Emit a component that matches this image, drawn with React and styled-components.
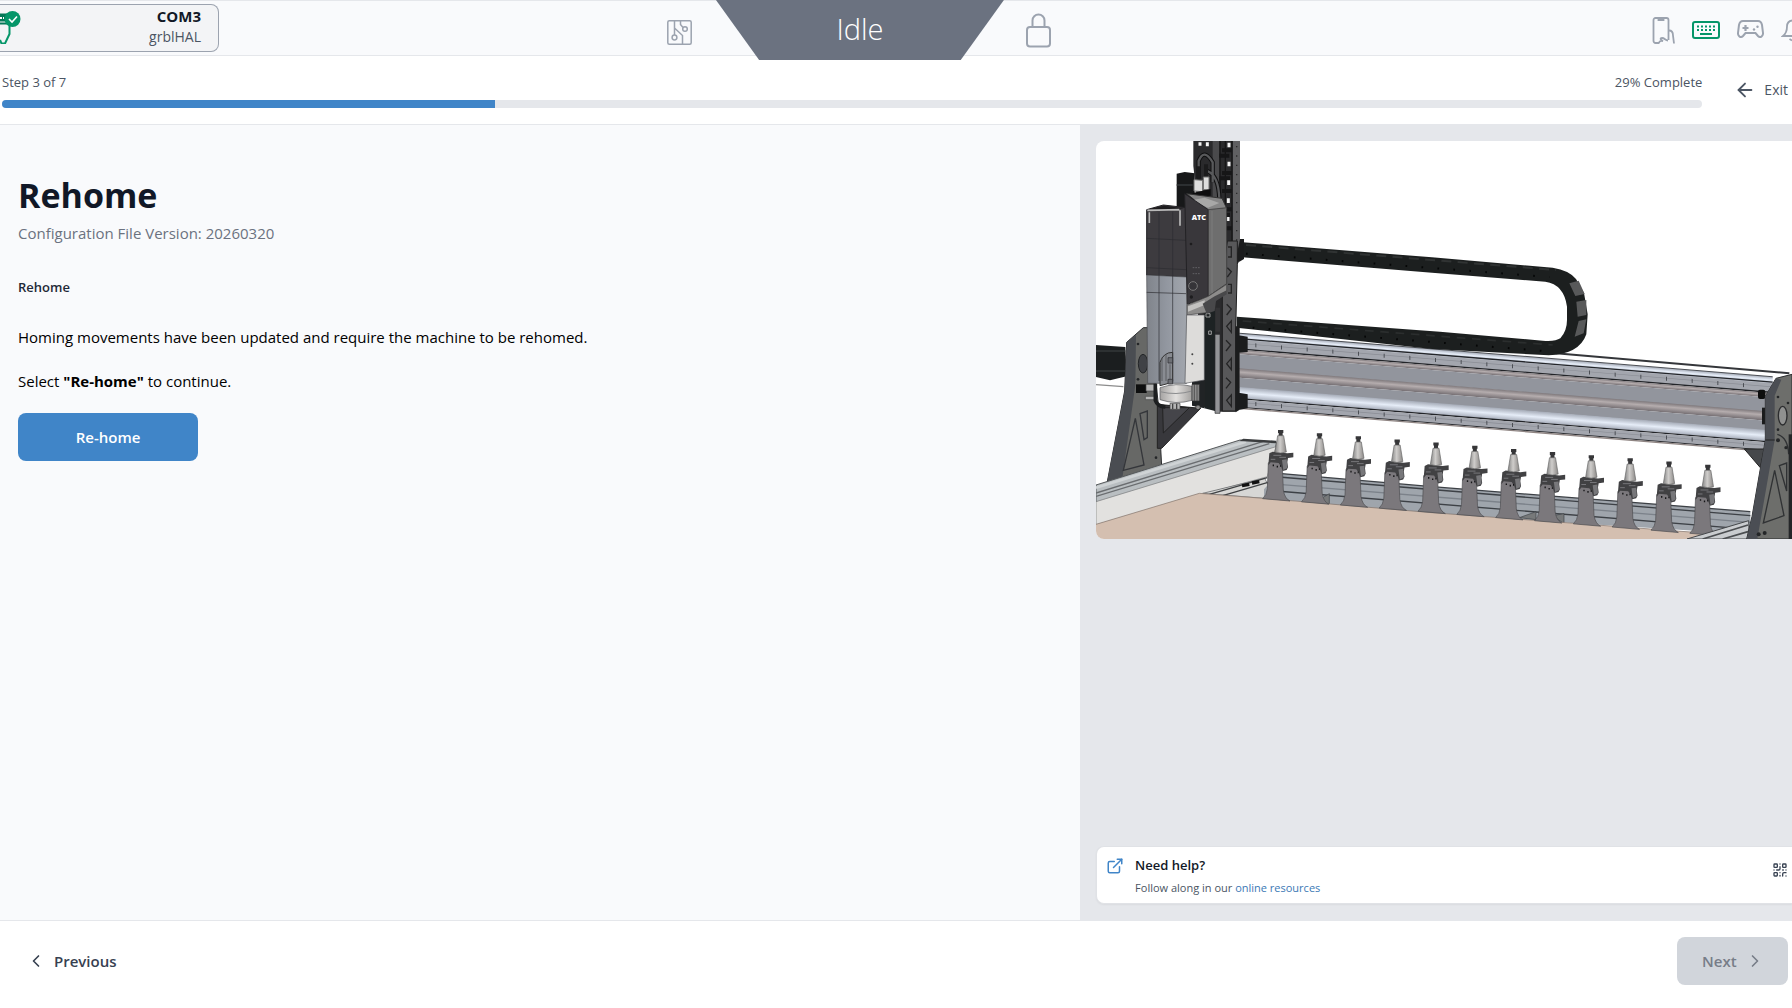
import React from "react";
import styled, { createGlobalStyle } from "styled-components";
import { LuArrowLeft, LuChevronLeft, LuChevronRight, LuExternalLink, LuQrCode } from "react-icons/lu";

const GlobalStyle = createGlobalStyle`
* {
    box-sizing: border-box;
}
body {
    margin: 0;
    overflow-x: hidden;
    background: #ffffff;
    color: #000000;
    font-family: "Open Sans", "Noto Sans", sans-serif;
    font-size: 15px;
    line-height: 24px;
}
button {
    font: inherit;
    color: inherit;
    border: 0;
    padding: 0;
    background: none;
    cursor: pointer;
}
h1, h2, p {
    margin: 0;
}
svg {
    display: block;
    flex-shrink: 0;
}
`

const Page = styled.div`
display: flex;
flex-direction: column;
min-height: 100vh;
`

const TopBar = styled.header`
display: grid;
grid-template-columns: 9fr auto 10fr;
height: 56px;
background: #f9fafc;
border-top: 1px solid #e5e7eb;
border-bottom: 1px solid #e5e7eb;
`

const PortCard = styled.button`
display: flex;
align-items: center;
justify-content: space-between;
width: 219px;
height: 48px;
margin-top: 3px;
padding: 0 17px 4px 0;
background: #f3f4f6;
border: 1px solid #9ca3af;
border-left: 0;
border-radius: 0 8px 8px 0;
text-align: right;
`

const PortName = styled.span`
display: block;
line-height: 22px;
font-weight: 700;
color: #111827;
`

const Firmware = styled.span`
display: block;
font-size: 14px;
line-height: 20px;
color: #4b5563;
`

const StatusGroup = styled.div`
display: flex;
align-items: flex-start;
margin-top: -1px;
`

const StatusIcon = styled.button`
width: 25px;
margin-top: ${(p) => p.$top}px;
color: #9ca3af;
`

const MachineStatus = styled.div`
z-index: 1;
width: 288px;
height: 60px;
margin: 0 22px 0 24px;
background: #6b7280;
clip-path: polygon(0 0, 100% 0, 85% 100%, 15% 100%);
color: #ffffff;
font-size: 29px;
font-weight: 300;
line-height: 58px;
text-align: center;
`

const Tray = styled.nav`
display: flex;
align-items: center;
justify-content: flex-end;
gap: 17px;
padding-bottom: 2px;
color: #9ca3af;
`

const TrayButton = styled.button`
color: ${(p) => (p.$active ? "#059669" : "inherit")};
`

const StepBar = styled.section`
display: flex;
align-items: center;
gap: 32px;
padding: 16px 4px 16px 2px;
border-bottom: 1px solid #e5e7eb;
color: #4b5563;
`

const Progress = styled.div`
flex: 1;
`

const ProgressLabels = styled.div`
display: flex;
justify-content: space-between;
margin-bottom: 8px;
font-size: 13px;
line-height: 20px;
`

const Track = styled.div`
height: 8px;
border-radius: 4px;
background: #e5e7eb;
overflow: hidden;
`

const Fill = styled.div`
height: 8px;
background: #4085c8;
`

const ExitButton = styled.button`
display: flex;
align-items: center;
gap: 8px;
font-size: 14px;
`

const Main = styled.main`
flex: 1;
display: grid;
grid-template-columns: 44fr 29fr;
`

const Content = styled.section`
display: flex;
flex-direction: column;
align-items: flex-start;
gap: 20px;
padding: 50px 18px;
background: #f9fafc;
`

const Title = styled.h1`
font-size: 34px;
line-height: 40px;
font-weight: 700;
color: #111827;
margin-bottom: 6px;
`

const Version = styled.p`
color: #6b7280;
`

const StepName = styled.h2`
margin: 12px 0 8px;
font-size: 13px;
line-height: 20px;
font-weight: 600;
color: #1f2937;
`

const PrimaryButton = styled.button`
width: 180px;
height: 48px;
border-radius: 8px;
background: #4085c8;
color: #ffffff;
font-weight: 600;
`

const Aside = styled.aside`
display: flex;
flex-direction: column;
justify-content: space-between;
padding: 16px 0 16px 16px;
background: #e5e7eb;
`

const Figure = styled.div`
height: 398px;
border-radius: 8px 0 0 8px;
background: #ffffff;
overflow: hidden;
`

const HelpCard = styled.div`
display: flex;
align-items: flex-start;
gap: 11px;
height: 58px;
padding: 8px 4px 8px 9px;
border: 1px solid #e0e2e6;
border-right: 0;
border-radius: 8px 0 0 8px;
background: #ffffff;
box-shadow: 0 1px 2px rgba(0, 0, 0, 0.05);
`

const HelpIcon = styled.span`
padding-top: 2px;
color: #4085c8;
`

const HelpText = styled.div`
flex: 1;
font-size: 11px;
line-height: 20px;
color: #4b5563;

strong {
    display: block;
    margin-bottom: 3px;
    font-size: 13px;
    font-weight: 600;
    color: #111827;
}
a {
    color: #3b78b5;
    text-decoration: none;
}
`

const QrButton = styled.button`
padding-top: 7px;
color: #374151;
`

const Footer = styled.footer`
display: flex;
align-items: center;
justify-content: space-between;
padding: 16px 4px 23px 26px;
border-top: 1px solid #e5e7eb;
`

const NavButton = styled.button`
display: flex;
align-items: center;
gap: 8px;
height: 48px;
font-size: 15px;
font-weight: 600;
color: #374151;

&:disabled {
    width: 111px;
    padding-left: 25px;
    border-radius: 8px;
    background: #d1d5db;
    color: #777d88;
    cursor: default;
}
`

function PlugIcon() {
    return (
        <svg width="22" height="36" viewBox="0 7 22 36" fill="none" stroke="#047857" strokeWidth="2">
            <path d="M0 12.500h8v8H0z" fill="#047857" stroke="none" />
            <path d="M0 17h4" stroke="#fff" strokeDasharray="2 1" />
            <path d="M0 22.500h10" />
            <path d="M9.500 24v9L5 42.500H1.500L0 39" stroke="#059669" />
            <circle cx="12.500" cy="18" r="8" fill="#059669" stroke="none" />
            <path d="M9 18l3 3 5-5.500" stroke="#fff" strokeWidth="1.600" />
        </svg>
    )
}

function BoardIcon() {
    return (
        <svg width="25" height="25" viewBox="0 0 25 25" fill="none" stroke="currentColor" strokeWidth="1.500">
            <rect x="0.800" y="0.800" width="23.400" height="23.400" rx="1.500" />
            <path d="M7.500 1v14M7.500 8l8 7.500V24M13.500 1v3.500l2.500 3" />
            <circle cx="7.500" cy="17.500" r="2.400" />
            <circle cx="18" cy="9" r="2.300" />
        </svg>
    )
}

function LockIcon() {
    return (
        <svg width="25" height="35" viewBox="0 0 25 35" fill="none" stroke="currentColor" strokeWidth="2">
            <rect x="1" y="14" width="23" height="19.500" rx="3" />
            <path d="M6.500 14V7.500a6 6 0 0 1 12 0V14" />
        </svg>
    )
}

function PhoneIcon() {
    return (
        <svg width="23" height="28" viewBox="0 0 23 28" fill="none" stroke="currentColor" strokeWidth="1.800">
            <path d="M7 27H3.500a2 2 0 0 1-2-2v-21a2 2 0 0 1 2-2h11a2 2 0 0 1 2 2V24" />
            <path d="M6.500 2.500v1.500h5V2.500" />
            <path d="M7 27.500c0-2 1.500-3 4-2.500-3-1.500-3-3-1-3 3 0 3 2.500 6 2.500M17 14.500c3 0 4 2 4 5l1 8" />
        </svg>
    )
}

function KeyboardIcon() {
    return (
        <svg width="28" height="18" viewBox="0 0 28 18" fill="none" stroke="currentColor" strokeWidth="2">
            <rect x="1" y="1" width="26" height="16" rx="2" />
            <path d="M5 5.500h18M5 9h18" strokeDasharray="2 2" />
            <path d="M8 13h12" />
        </svg>
    )
}

function GamepadIcon() {
    return (
        <svg width="27" height="19" viewBox="0 0 27 19" fill="none" stroke="currentColor" strokeWidth="2">
            <path d="M6 1h15c2 0 3.500 1.500 4 4l1 8c.3 3-2.800 5.500-5 3l-2.500-3h-10L6 16c-2.200 2.500-5.300 0-5-3l1-8c.5-2.500 2-4 4-4z" />
            <path d="M5.500 8h6M8.500 5v6" strokeWidth="2.200" />
            <circle cx="17" cy="9.500" r="1.200" fill="currentColor" stroke="none" />
            <circle cx="20.500" cy="6.800" r="1.200" fill="currentColor" stroke="none" />
        </svg>
    )
}

function BellIcon() {
    return (
        <svg width="11" height="24" viewBox="0 0 11 24" fill="none" stroke="currentColor" strokeWidth="1.800">
            <path d="M11 2.500c-3 .5-5 3-5 6 0 5-1.500 7.500-4 9.500h9M8.500 21l2.500 1.500" />
        </svg>
    )
}

const forks = Array.from({ length: 12 }, (_, i) => i);

function ToolHolder({ index }) {
    return (
        <g transform={`translate(${554 + index * 116.5} ${867 + index * 9.45})`}>
            <path d="M-37 100Q-34 92-28 94H-2Q4 98 5 110L8 180Q12 206 28 213L-54 206Q-42 196-40 176z" fill="#7b787c" stroke="#4c4b4e" strokeWidth="2" />
            <path d="M-37 106l3-36 10-5 44 5 18-2v14l-16 2-2 12 2 16-4 8-12 3-4-12-8-12-24-2z" fill="#414143" />
            <path d="M4 90l14-2 2 26-12 6z" fill="#77777a" />
            <path d="M-22 76h24M-4 82h20M-30 88h14" stroke="#77777b" strokeWidth="3" />
            <path d="M-24 106h4M-12 110h4M-2 108h3" stroke="#151517" strokeWidth="5" />
            <path d="M-8 0H8V9H6V18H-6V9H-8z" fill="#363638" />
            <path d="M-9 17H9L17 66Q0 72-17 66z" fill="url(#cone)" stroke="#666" strokeWidth="2" />
        </g>
    )
}

// Units are thirds of a pixel so the small parts can stay on whole numbers
function MachineDrawing() {
    return (
        <svg width="100%" height="398" viewBox="0 0 2088 1194" preserveAspectRatio="xMinYMin slice" role="img" aria-label="CNC machine with tool rack">
            <defs>
                <linearGradient id="cone">
                    <stop offset="0" stopColor="#858585" />
                    <stop offset="0.45" stopColor="#cfcdcb" />
                    <stop offset="1" stopColor="#8a8785" />
                </linearGradient>
                <linearGradient id="nose">
                    <stop offset="0" stopColor="#a5a3a2" />
                    <stop offset="0.5" stopColor="#e2e0de" />
                    <stop offset="1" stopColor="#a3a19f" />
                </linearGradient>
                <linearGradient id="tube" x1="0" y1="0" x2="0" y2="1">
                    <stop offset="0" stopColor="#7f797c" />
                    <stop offset="0.4" stopColor="#b5adae" />
                    <stop offset="1" stopColor="#746e72" />
                </linearGradient>
                <linearGradient id="bright" x1="0" y1="0" x2="0" y2="1">
                    <stop offset="0" stopColor="#a6acb8" />
                    <stop offset="0.5" stopColor="#e6edf8" />
                    <stop offset="1" stopColor="#a8aebb" />
                </linearGradient>
                <linearGradient id="spindle">
                    <stop offset="0" stopColor="#80848b" />
                    <stop offset="0.5" stopColor="#9297a0" />
                    <stop offset="1" stopColor="#a2a6ad" />
                </linearGradient>
            </defs>

            {/* left leg, axis motor and gusset */}
            <path d="M0 612l88 6 4 88-50 12-42-10z" fill="#1b1e1f" />
            <path d="M0 630h88M0 690h88" stroke="#34383a" strokeWidth="5" />
            <path d="M0 731l82 6" stroke="#8c8c8c" strokeWidth="4" />
            <path d="M92 604l50-44 20 0 25 230 10 186-160 46H34L86 750z" fill="#676866" stroke="#2b2c2e" strokeWidth="3" />
            <path d="M92 604l28-22-2 150-40 287H34L86 750z" fill="#4a4d52" />
            <path d="M118 832l-36 156 62-16z M132 818l22-8v80l-10 6z" fill="none" stroke="#34363a" strokeWidth="4" />
            <ellipse cx="141" cy="668" rx="14" ry="28" fill="#404246" stroke="#242628" strokeWidth="3" />
            <circle cx="126" cy="609" r="4" fill="#242628" />
            <circle cx="126" cy="715" r="4" fill="#242628" />
            <circle cx="180" cy="950" r="4" fill="#242628" />
            <path d="M184 790l130 12-117 120h-13z" fill="#38383c" stroke="#222" strokeWidth="3" />
            <path d="M200 800h80l-78 76z" fill="#45454a" stroke="#222" strokeWidth="3" />

            {/* gantry beam */}
            <g transform="translate(430 0) skewY(4.66)">
                <rect y="577" width="1600" height="20" fill="url(#bright)" />
                <rect y="575" width="1600" height="3" fill="#4b4e54" />
                <rect y="591" width="1600" height="4" fill="#232529" />
                <rect y="596" width="1600" height="28" fill="#a3a6ae" />
                <rect y="606" width="1600" height="2" fill="#8a8d95" />
                <path d="M48 609h1540" stroke="#4b4e54" strokeWidth="12" strokeDasharray="3 74" />
                <rect y="622" width="1600" height="4" fill="#222428" />
                <rect y="626" width="1600" height="14" fill="url(#tube)" />
                <rect y="640" width="1600" height="44" fill="#92959d" />
                <rect y="682" width="1600" height="28" fill="url(#tube)" />
                <rect y="710" width="1600" height="30" fill="#92959d" />
                <rect y="738" width="1600" height="34" fill="url(#bright)" />
                <rect y="771" width="1600" height="4" fill="#222428" />
                <rect y="775" width="1600" height="24" fill="#a3a6ae" />
                <rect y="783" width="1600" height="2" fill="#8a8d95" />
                <path d="M48 785h1540" stroke="#4b4e54" strokeWidth="12" strokeDasharray="3 74" />
                <rect y="797" width="1600" height="3" fill="#2b2d31" />
                <rect y="800" width="1600" height="4" fill="#8f8583" />
            </g>
            <path d="M1380 637l700 60" stroke="#34363a" strokeWidth="6" />

            {/* cable chain */}
            <path
                d="M430 303L1008 349L1370 380Q1420 388 1440 414L1464 456L1475 520L1471 580Q1450 640 1358 643L1008 624L422 560V527L1032 572L1340 599Q1378 602 1393 592Q1413 570 1413 537V497Q1404 430 1348 422L1008 395L430 348z"
                fill="#1c1f1f"
            />
            <path d="M450 312L1380 387" stroke="#303333" strokeWidth="6" strokeDasharray="30 19" />
            <path d="M450 338L1360 408" stroke="#050606" strokeWidth="6" strokeDasharray="5 43" />
            <path d="M440 540L1370 612" stroke="#2b2e2e" strokeWidth="5" strokeDasharray="26 20" />
            <path d="M470 560L1370 632" stroke="#050606" strokeWidth="6" strokeDasharray="5 43" />
            <path d="M1420 427l28-8 18 40-28 6zM1441 482l30-5v45l-26 5zM1448 540l23-5-8 42-27 10z" fill="#58595a" />

            {/* table rail and spoil board */}
            <path d="M0 1032L432 897L542 903L536 930L0 1085z" fill="#b9bec1" stroke="#55585a" strokeWidth="3" />
            <path d="M0 1056L500 902M0 1066L520 908" stroke="#6a6d70" strokeWidth="4" />
            <path d="M0 1040L450 902" stroke="#cfd3d5" strokeWidth="8" />
            <path d="M430 900l12-7 98 6v8z" fill="#3a3c3e" />
            <path d="M0 1082L540 917L514 1007L320 1060L0 1152z" fill="#e2e1df" stroke="#77787a" strokeWidth="2" />
            <path d="M320 1057L506 1012L540 1075z" fill="#d7d7d5" stroke="#55585a" strokeWidth="2" />
            <path d="M340 1060L514 1010M380 1064L516 1024" stroke="#3f4143" strokeWidth="4" />
            <path d="M438 1034l22-4M468 1026l22-4" stroke="#111" strokeWidth="10" />
            <path d="M548 997L1008 1037L1963 1112V1180L1008 1120L504 1072V1045z" fill="#9fa5ac" />
            <path d="M548 997L1008 1037L1963 1112M548 1008L1963 1124M540 1050L1963 1165" fill="none" stroke="#3d4146" strokeWidth="4" />
            <path d="M548 1030L1963 1144" stroke="#7c828a" strokeWidth="4" />
            <path d="M680 1070l20-12v30h-20zM1270 1130l50-18v24zM1370 1124l34-6v30z" fill="#77797a" stroke="#3d4146" strokeWidth="2" />
            <path d="M0 1150L310 1057L502 1072L1008 1115L1860 1178L1800 1194H0z" fill="#d4bfb0" />
            <path d="M0 1150L310 1057L502 1072L1008 1115L1850 1178" fill="none" stroke="#7d7068" strokeWidth="2" />
            {forks.map((i) => <ToolHolder key={i} index={i} />)}
            <path d="M1773 1194L1958 1139L1960 1194z" fill="#c9cccf" stroke="#45484b" strokeWidth="3" />
            <path d="M1820 1194L1956 1152M1880 1194L1956 1172" stroke="#4b4e51" strokeWidth="5" />

            {/* right leg */}
            <path d="M1945 924l60 0-12 56z" fill="#46484b" stroke="#222" strokeWidth="3" />
            <rect x="1986" y="746" width="22" height="28" rx="6" fill="#0d0e0e" />
            <rect x="1998" y="800" width="12" height="50" fill="#1a1b1c" />
            <path d="M2008 766L2040 712L2088 700V1194H1952L1968 1127L2008 897z" fill="#6d6e6b" stroke="#2b2c2e" strokeWidth="3" />
            <path d="M2008 766L2040 712L2056 716L2036 764V897L1984 1194H1952L1968 1127L2008 897z" fill="#4b4e54" />
            <path d="M2008 897h28" stroke="#222" strokeWidth="3" />
            <ellipse cx="2060" cy="824" rx="13" ry="28" fill="#909190" stroke="#2c2d2f" strokeWidth="4" />
            <path d="M2036 988L2002 1146L2064 1124zM2050 974l22-8v84z" fill="none" stroke="#303234" strokeWidth="4" />
            <path d="M2044 880q32 10 34 60" fill="none" stroke="#303234" strokeWidth="4" />
            <g fill="#242628">
                <circle cx="2046" cy="768" r="4" />
                <circle cx="2046" cy="866" r="4" />
                <circle cx="2076" cy="786" r="4" />
                <circle cx="2046" cy="898" r="6" />
                <circle cx="2070" cy="920" r="5" />
                <circle cx="1988" cy="1180" r="6" />
                <circle cx="2006" cy="1176" r="6" />
                <rect x="2078" y="880" width="10" height="314" />
            </g>

            {/* z column */}
            <path d="M292 0h140v357l-12 20v435h-48l-66-20V200L292 75z" fill="#2a2a2c" />
            <path d="M350 0h20v180h-20z" fill="#4a4a4c" />
            <path d="M410 0h22v357h-22z" fill="#606062" />
            <path d="M372 0v190M388 0v300M408 0v350" stroke="#151516" strokeWidth="4" />
            <path d="M378 28h30M370 44h30M378 96h30M370 112h32M378 150h30M378 205h30M370 222h32M378 262h30" stroke="#161617" strokeWidth="12" />
            <path d="M399 5v14M399 62v14M398 118v14M397 172v14M396 228v12M334 4v12M312 4v10" stroke="#f4f4f4" strokeWidth="9" />
            <path d="M422 15v340" stroke="#2a2a2b" strokeWidth="4" strokeDasharray="4 24" />
            <path d="M432 294h12v60l-14 8-10-10z" fill="#1b1c1d" />
            <path d="M394 300h30v70l-5 200v240h-40V420z" fill="#58585a" stroke="#1e1e1f" strokeWidth="3" />
            <path d="M419 556h12v250l-12 8zM428 583l27 4v46l-27 2zM428 755l27 5v42l-27 5z" fill="#1b1c1d" />
            <path d="M394 380l12 12-12 16M392 490l14 14-14 18M390 598l14 14-14 18M390 710l14 14-14 18M406 540l-14 16 14 18zM406 652l-14 16 14 18zM406 762l-14 16 14 18zM396 318h10v30h-10M396 430h10v26h-10" fill="none" stroke="#242425" strokeWidth="4" />
            <path d="M325 500h32v310l-32-8z" fill="#1d2223" />
            <path d="M358 500h14v72h-14z" fill="#333335" />
            <path d="M357 580h15v237h-15z" fill="#939497" stroke="#2c2c2e" strokeWidth="2" />
            <path d="M338 570h8v10h-8zM330 518h12v10h-12zM322 768v10" fill="none" stroke="#9c9c9c" strokeWidth="3" />
            <path d="M288 718h37v84l-37-8z" fill="#202325" />

            {/* connectors and spindle */}
            <path d="M242 98l24-5 30 4v150h-54z" fill="#171819" />
            <path d="M242 132h48" stroke="#35373a" strokeWidth="4" />
            <path d="M308 112V60q16-40 42 4v60M334 90q34 14 36 84" fill="none" stroke="#101011" strokeWidth="13" />
            <path d="M308 112V60q16-40 42 4v60M334 90q34 14 36 84" fill="none" stroke="#58595b" strokeWidth="7" />
            <path d="M302 76h12v42h-12zM324 70h12v38h-12z" fill="#1b1b1c" />
            <path d="M294 116l26 2v34l-26-2zM322 108h17v38h-17z" fill="#dededd" stroke="#6f6f6f" strokeWidth="3" />
            <path d="M290 156l54-12v20l-54 4z" fill="#0d0d0e" />
            <path d="M272 158L378 172L392 202L337 210z" fill="#868686" stroke="#333" strokeWidth="3" />
            <path d="M286 178l40-8 44 16-34 14z" fill="#a8a8a7" />
            <path d="M152 206L202 192L272 200V408L152 402z" fill="#3d3b3f" stroke="#232225" strokeWidth="3" />
            <path d="M160 204l44-10 60 8-44 6z" fill="#1d1c1e" />
            <path d="M154 208L250 206M160 214v32M252 208v46" stroke="#b9b9b9" strokeWidth="5" fill="none" />
            <path d="M152 402L272 408V727H155z" fill="url(#spindle)" stroke="#4b4d52" strokeWidth="2" />
            <path d="M189 214V720M230 212V720M152 292l118 6M152 380l118 6M152 454l118 4" fill="none" stroke="#2c2c30" strokeWidth="2" />
            <path d="M266 158L337 206V467L274 490z" fill="#39373b" stroke="#232225" strokeWidth="3" />
            <path d="M337 206L392 200V428L337 466z" fill="#6e6e6e" stroke="#333" strokeWidth="2" />
            <path d="M348 210V458" stroke="#858585" strokeWidth="2" />
            <circle cx="291" cy="435" r="13" fill="#353438" stroke="#777" strokeWidth="3" />
            <circle cx="285" cy="309" r="4" fill="#1d1c1e" />
            <circle cx="286" cy="468" r="5" fill="#1d1c1e" />
            <path d="M290 380h22M290 398h22" stroke="#77757a" strokeWidth="2" strokeDasharray="5 3" />
            <text x="287" y="237" fill="#fff" fontFamily="Open Sans, sans-serif" fontSize="22" fontWeight="800">ATC</text>
            <path d="M274 492L337 466L392 430V455L362 475L330 515L274 522z" fill="#8d8c8b" stroke="#444" strokeWidth="2" />
            <path d="M276 496l50-18v14l-50 20z" fill="#c3c2c0" />
            <path d="M320 488l36-22 36-18v12l-32 20-4 30-24 8z" fill="#48484a" />
            <path d="M272 522h53v195l-58 10z" fill="#dddcda" stroke="#55565a" strokeWidth="2" />
            <circle cx="289" cy="640" r="3" fill="#444" />
            <circle cx="289" cy="668" r="3" fill="#444" />

            {/* spindle nose */}
            <path d="M192 664q10-30 38-30v90l-38 10z" fill="#898c92" stroke="#333" strokeWidth="3" />
            <path d="M198 650v70M210 640v80M222 670v60" stroke="#5c5e63" strokeWidth="3" />
            <path d="M216 650h14v16h-14zM216 715h14v14h-14z" fill="#6d6f74" stroke="#2c2c30" strokeWidth="2" />
            <path d="M120 730h32v26h-32z" fill="#0e0f0f" />
            <path d="M150 730h30v20h-30zM148 766h34v10h-34z" fill="#b5b5b5" stroke="#444" strokeWidth="2" />
            <path d="M178 728v50q6 18 30 20" fill="none" stroke="#1d1f20" strokeWidth="11" />
            <path d="M192 740Q240 724 288 736V778Q240 792 192 776z" fill="url(#nose)" stroke="#55565a" strokeWidth="2" />
            <path d="M192 752Q240 764 288 750" fill="none" stroke="#8b8c8e" strokeWidth="3" />
            <path d="M222 787h30v18h-30z" fill="#b5b5b5" stroke="#444" strokeWidth="2" />
            <path d="M230 788v16M242 788v16" stroke="#444" strokeWidth="4" />
            <path d="M288 730h22v50h-22z" fill="#8c8c8c" stroke="#333" strokeWidth="2" />
            <path d="M295 730v50M303 730v50" stroke="#333" strokeWidth="2" />
            <circle cx="306" cy="799" r="7" fill="#8c8c8c" stroke="#222" strokeWidth="2" />
        </svg>
    )
}

export default function App() {
    const progress = 29;

    return (
        <Page>
            <GlobalStyle />
            <TopBar>
                <PortCard type="button">
                    <PlugIcon />
                    <span>
                        <PortName>COM3</PortName>
                        <Firmware>grblHAL</Firmware>
                    </span>
                </PortCard>
                <StatusGroup>
                    <StatusIcon type="button" title="Board" $top={20}>
                        <BoardIcon />
                    </StatusIcon>
                    <MachineStatus>Idle</MachineStatus>
                    <StatusIcon type="button" title="Lock" $top={13}>
                        <LockIcon />
                    </StatusIcon>
                </StatusGroup>
                <Tray>
                    <TrayButton type="button" title="Remote"><PhoneIcon /></TrayButton>
                    <TrayButton type="button" title="Keyboard" $active><KeyboardIcon /></TrayButton>
                    <TrayButton type="button" title="Gamepad"><GamepadIcon /></TrayButton>
                    <TrayButton type="button" title="Notifications"><BellIcon /></TrayButton>
                </Tray>
            </TopBar>

            <StepBar>
                <Progress>
                    <ProgressLabels>
                        <span>Step 3 of 7</span>
                        <span>{progress}% Complete</span>
                    </ProgressLabels>
                    <Track>
                        <Fill style={{ width: `${progress}%` }} />
                    </Track>
                </Progress>
                <ExitButton type="button">
                    <LuArrowLeft size={22} />
                    Exit
                </ExitButton>
            </StepBar>

            <Main>
                <Content>
                    <div>
                        <Title>Rehome</Title>
                        <Version>Configuration File Version: 20260320</Version>
                    </div>
                    <StepName>Rehome</StepName>
                    <p>Homing movements have been updated and require the machine to be rehomed.</p>
                    <p>Select <b>"Re-home"</b> to continue.</p>
                    <PrimaryButton type="button">Re-home</PrimaryButton>
                </Content>
                <Aside>
                    <Figure>
                        <MachineDrawing />
                    </Figure>
                    <HelpCard>
                        <HelpIcon>
                            <LuExternalLink size={18} />
                        </HelpIcon>
                        <HelpText>
                            <strong>Need help?</strong>
                            Follow along in our <a href="#resources">online resources</a>
                        </HelpText>
                        <QrButton type="button" title="Show QR code">
                            <LuQrCode size={16} />
                        </QrButton>
                    </HelpCard>
                </Aside>
            </Main>

            <Footer>
                <NavButton type="button">
                    <LuChevronLeft size={20} />
                    Previous
                </NavButton>
                <NavButton type="button" disabled>
                    Next
                    <LuChevronRight size={20} />
                </NavButton>
            </Footer>
        </Page>
    )
}
